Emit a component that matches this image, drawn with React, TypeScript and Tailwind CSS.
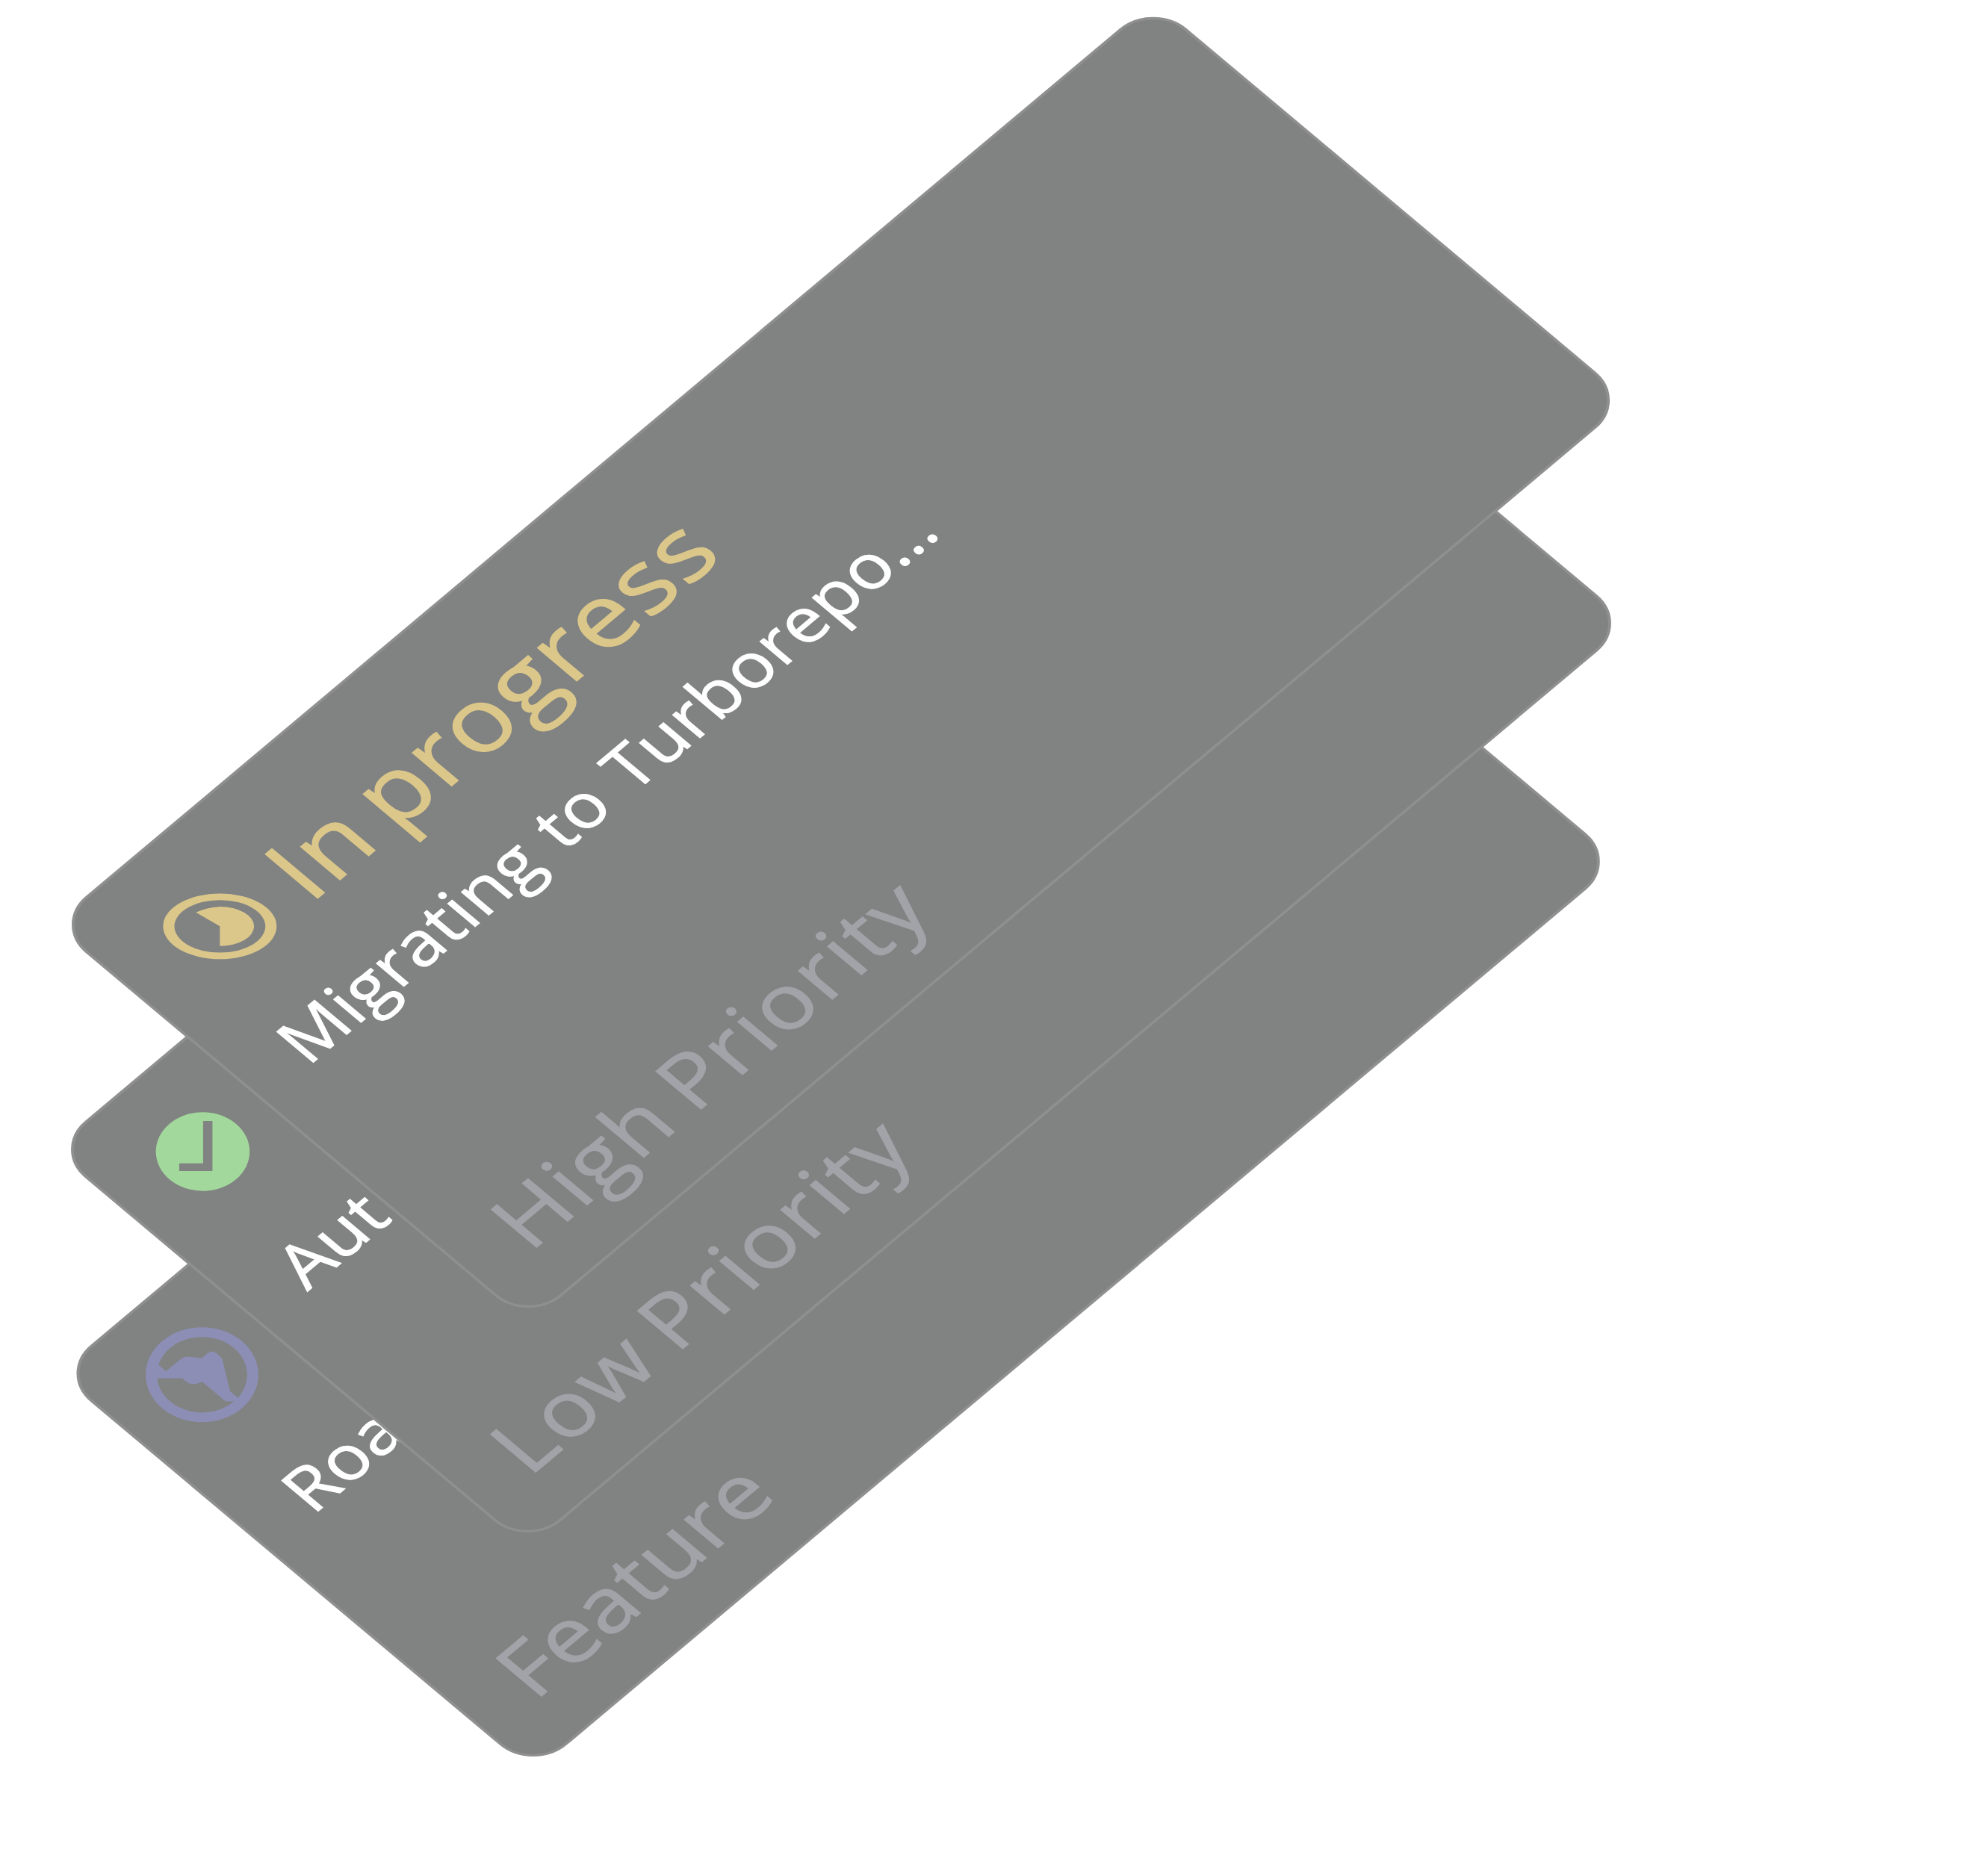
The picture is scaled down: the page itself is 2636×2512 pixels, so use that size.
import type { ReactNode } from "react";

// Maps drawings made in upright screen units back into the tilted card plane.
const UPRIGHT = "matrix(0.7071 0.7071 -0.8425 0.8425 0 0)";

function ProgressIcon() {
  return (
    <svg className="absolute left-[77px] top-[81px] h-[152px] w-[152px] overflow-visible" viewBox="-76 -76 152 152">
      <g transform={UPRIGHT} fill="#dcc78b">
        <path fillRule="evenodd" d="M-76 0A76 43.9 0 1 1 76 0A76 43.9 0 1 1 -76 0ZM-60.9 0A60.9 35.2 0 1 0 60.9 0A60.9 35.2 0 1 0 -60.9 0Z" />
        <path d="M0 0V26.4A45.8 26.4 0 0 0 45.8 0A45.8 26.4 0 0 0 0 -26.4A60 34 0 0 0 -32 -18.5Z" />
      </g>
    </svg>
  );
}

function DoneIcon() {
  return (
    <svg className="absolute left-[74px] top-[79px] h-[126px] w-[126px] overflow-visible" viewBox="-63 -63 126 126">
      <g transform={UPRIGHT}>
        <ellipse rx="62.8" ry="52.7" fill="#a2d89b" />
        <path fill="#818382" d="M0.5 -41H13V26.1H-31.5V15.7H0.5Z" />
      </g>
    </svg>
  );
}

function RoadmapIcon() {
  return (
    <svg className="absolute left-[56px] top-[59px] h-[152px] w-[152px] overflow-visible" viewBox="-76 -76 152 152">
      <g transform={UPRIGHT} fill="#8c8eb6">
        <path fillRule="evenodd" d="M-75.4 0A75.4 63.5 0 1 1 75.4 0A75.4 63.5 0 1 1 -75.4 0ZM-60.4 0A60.4 50.6 0 1 0 60.4 0A60.4 50.6 0 1 0 -60.4 0Z" />
        <g transform="scale(0.33333) translate(-571.5 -304)">
          <path d="M375 247L397 265L427 290L484 243Q497 231 520 232L571 237L595 217Q611 206 628 216L645 231Q652 237 654 246L684 371L716 397L740 411H670Q665 411 660 406L572 332Q557 342 540 342Q520 342 507 331L492 318H375Z" />
        </g>
      </g>
    </svg>
  );
}

type CardProps = {
  frame: string;
  icon: ReactNode;
  title?: string;
  body: string;
  note: string;
  noteSpacing: string;
};

function Card({ frame, icon, title, body, note, noteSpacing }: CardProps) {
  return (
    <article
      className={`absolute left-0 top-0 flex origin-top-left flex-col whitespace-nowrap rounded-[64px] border-4 border-[#8f8f8f] bg-[#818382] pl-[78px] ${frame}`}
    >
      {icon}
      <h2 className="mt-[95px] ml-[185px] h-[139px] origin-left scale-x-[1.067] text-[139px] leading-[139px] font-[450] tracking-[2.1px] text-[#dcc78b] [word-spacing:-14.5px] [-webkit-text-stroke:1.5px_#dcc78b]">
        {title}
      </h2>
      <p className="mt-[79px] h-[97px] origin-left scale-x-[1.045] text-[97px] leading-[97px] font-[450] tracking-[0.3px] text-white [word-spacing:6px] [-webkit-text-stroke:1.2px_#ffffff]">
        {body}
      </p>
      <p
        className={`mt-[303px] h-[120px] origin-left scale-x-[1.07] text-[120px] leading-[120px] font-[450] text-[#a2a3a8] [word-spacing:-10px] [-webkit-text-stroke:1.3px_#a2a3a8] ${noteSpacing}`}
      >
        {note}
      </p>
    </article>
  );
}

export default function App() {
  return (
    <main className="relative h-[2512px] w-[2636px] overflow-hidden bg-white font-['Open_Sans',sans-serif]">
      <Card
        frame="h-[902px] w-[2057px] [transform:matrix(0.7071,-0.5935,0.7071,0.5935,76,1839)]"
        icon={<RoadmapIcon />}
        body="Roa"
        note="Feature"
        noteSpacing="tracking-[0.4px]"
      />
      <Card
        frame="h-[902px] w-[2089px] [transform:matrix(0.7071,-0.5935,0.7071,0.5935,68.5,1539)]"
        icon={<DoneIcon />}
        body="Aut"
        note="Low Priority"
        noteSpacing="tracking-[2.8px]"
      />
      <Card
        frame="h-[902px] w-[2085px] [transform:matrix(0.7071,-0.5935,0.7071,0.5935,69.5,1238)]"
        icon={<ProgressIcon />}
        title="In progress"
        body="Migrating to Turborepo…"
        note="High Priority"
        noteSpacing="tracking-[2.5px]"
      />
    </main>
  );
}
